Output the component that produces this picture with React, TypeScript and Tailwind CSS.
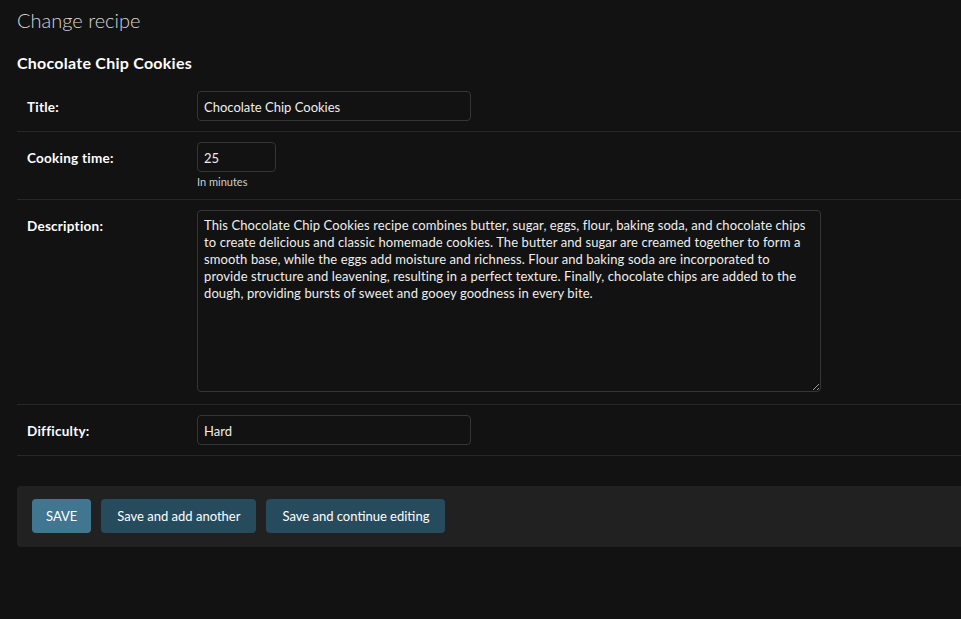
import { useState } from "react";

const DESCRIPTION =
  "This Chocolate Chip Cookies recipe combines butter, sugar, eggs, flour, baking soda, and chocolate chips to create delicious and classic homemade cookies. The butter and sugar are creamed together to form a smooth base, while the eggs add moisture and richness. Flour and baking soda are incorporated to provide structure and leavening, resulting in a perfect texture. Finally, chocolate chips are added to the dough, providing bursts of sweet and gooey goodness in every bite.";

function Row({ label, children }: { label: string; children: React.ReactNode }) {
  return (
    <div className="flex border-b border-[#272727] py-[10px] pl-[10px]">
      <label className="w-[170px] shrink-0 pt-[6px] text-[13.5px] font-bold tracking-[0.25px] text-white">{label}</label>
      <div>{children}</div>
    </div>
  );
}

export default function App() {
  const [title, setTitle] = useState("Chocolate Chip Cookies");
  const [time, setTime] = useState("25");
  const [desc, setDesc] = useState(DESCRIPTION);
  const [difficulty, setDifficulty] = useState("Hard");

  const input =
    "h-[30px] rounded-[4px] border border-[#353535] bg-[#121212] px-[6px] pt-[2px] text-[13px] text-[#eeeeee] outline-none";
  const button = "h-[34px] rounded-[4px] pt-[2px] text-[13px] text-white";

  return (
    <div className="min-h-[619px] w-[961px] overflow-hidden bg-[#121212] font-['Lato','Liberation_Sans',sans-serif] text-[#eeeeee]">
      <div className="pl-[17px] pt-[8px]">
        <h1 className="text-[20px] font-light leading-[24px] text-[#d6d6d6]">Change recipe</h1>
        <h2 className="mt-[22px] text-[16px] font-bold leading-[18px] tracking-[0.25px] text-white">Chocolate Chip Cookies</h2>

        <div className="mt-[9px]">
          <Row label="Title:">
            <input className={`${input} w-[274px]`} value={title} onChange={(e) => setTitle(e.target.value)} />
          </Row>
          <Row label="Cooking time:">
            <input className={`${input} w-[79px]`} value={time} onChange={(e) => setTime(e.target.value)} />
            <div className="mt-[3px] text-[11px] leading-[14px] text-[#cfcfcf]">In minutes</div>
          </Row>
          <Row label="Description:">
            <textarea
              className="mb-[2px] block h-[182px] w-[624px] rounded-[4px] border border-[#353535] bg-[#121212] px-[6px] pb-[4px] pt-[6px] text-[13px] leading-[17px] tracking-[0.1px] text-[#eeeeee] outline-none"
              value={desc}
              onChange={(e) => setDesc(e.target.value)}
            />
          </Row>
          <Row label="Difficulty:">
            <input className={`${input} w-[274px]`} value={difficulty} onChange={(e) => setDifficulty(e.target.value)} />
          </Row>
        </div>

        <div className="mt-[30px] flex gap-[10px] rounded-l-[4px] bg-[#212121] pb-[14px] pl-[15px] pt-[13px]">
          <button className={`${button} bg-[#417690] px-[14px]`}>SAVE</button>
          <button className={`${button} bg-[#264b5d] px-[16px]`}>Save and add another</button>
          <button className={`${button} bg-[#264b5d] px-[16px]`}>Save and continue editing</button>
        </div>
      </div>
    </div>
  );
}
